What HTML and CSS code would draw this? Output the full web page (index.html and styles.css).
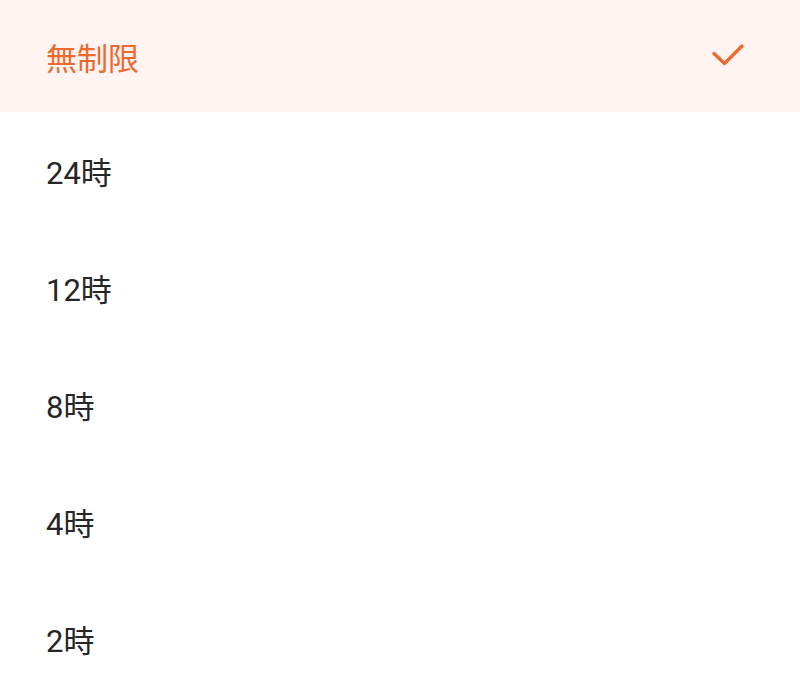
FILE: index.html
```html
<!DOCTYPE html>
<html lang="ja">
<head>
<meta charset="utf-8">
<link rel="stylesheet" href="styles.css">
</head>
<body>
<ul class="list">
  <li class="item selected">
    <span class="label">無制限</span>
    <svg class="check" width="36" height="28" viewBox="0 0 36 28"><path d="M3 11.5 L13.5 21.5 L31 4" fill="none" stroke="#ec6a30" stroke-width="3.4" stroke-linecap="round" stroke-linejoin="round"/></svg>
  </li>
  <li class="item"><span class="label">24時</span></li>
  <li class="item"><span class="label">12時</span></li>
  <li class="item"><span class="label">8時</span></li>
  <li class="item"><span class="label">4時</span></li>
  <li class="item"><span class="label">2時</span></li>
</ul>
</body>
</html>
```
FILE: styles.css
```css
html, body {
  margin: 0;
  padding: 0;
  background: #ffffff;
}
.list {
  list-style: none;
  margin: 0;
  padding: 0;
  font-family: Roboto, "Noto Sans CJK JP", sans-serif;
  font-size: 31px;
  color: #262626;
}
.item {
  display: flex;
  align-items: center;
  justify-content: space-between;
  height: 117px;
  padding: 0 53px 0 46px;
  line-height: 1;
}
.item.selected {
  height: 112px;
  background: #fff4f1;
  color: #ec6a30;
}
.label {
  display: block;
  transform: translateY(3px);
}
.check {
  display: block;
  margin-top: 0;
}
```
